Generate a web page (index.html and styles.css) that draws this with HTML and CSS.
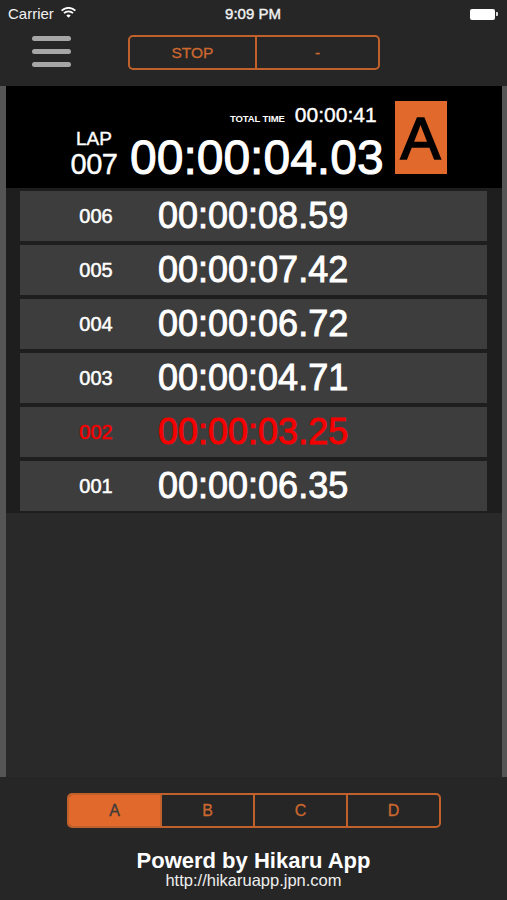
FILE: index.html
```html
<!DOCTYPE html>
<html>
<head>
<meta charset="utf-8">
<link rel="stylesheet" href="styles.css">
</head>
<body>
<div class="status">
  <div class="carrier">Carrier
    <svg class="wifi" width="15" height="11" viewBox="0 0 15 11">
      <path d="M0.6 3.6 A10 10 0 0 1 14.4 3.6" fill="none" stroke="#fff" stroke-width="1.8"/>
      <path d="M3 6.1 A6.6 6.6 0 0 1 12 6.1" fill="none" stroke="#fff" stroke-width="1.8"/>
      <path d="M5.3 8.5 A3.2 3.2 0 0 1 9.7 8.5 L7.5 10.8 Z" fill="#fff"/>
    </svg>
  </div>
  <div class="clock">9:09 PM</div>
  <div class="battery"><span class="batt-body"></span><span class="batt-nub"></span></div>
</div>

<div class="nav">
  <div class="hamburger"><span></span><span></span><span></span></div>
  <div class="seg seg-top">
    <div class="seg-item">STOP</div>
    <div class="seg-item">-</div>
  </div>
</div>

<div class="panel">
  <div class="header">
    <div class="lap">
      <div class="lap-label">LAP</div>
      <div class="lap-num">007</div>
    </div>
    <div class="main-time">
      <div class="total"><span class="total-label">TOTAL TIME</span><span class="total-val">00:00:41</span></div>
      <div class="big">00:00:04.03</div>
    </div>
    <div class="badge">A</div>
  </div>
  <div class="list">
    <div class="row"><span class="num">006</span><span class="time">00:00:08.59</span></div>
    <div class="row"><span class="num">005</span><span class="time">00:00:07.42</span></div>
    <div class="row"><span class="num">004</span><span class="time">00:00:06.72</span></div>
    <div class="row"><span class="num">003</span><span class="time">00:00:04.71</span></div>
    <div class="row red"><span class="num">002</span><span class="time">00:00:03.25</span></div>
    <div class="row"><span class="num">001</span><span class="time">00:00:06.35</span></div>
  </div>
  <div class="filler"></div>
</div>

<div class="seg seg-bottom">
  <div class="seg-item active">A</div>
  <div class="seg-item">B</div>
  <div class="seg-item">C</div>
  <div class="seg-item">D</div>
</div>

<div class="footer">
  <div class="powered">Powerd by Hikaru App</div>
  <div class="url">http://hikaruapp.jpn.com</div>
</div>
</body>
</html>
```

FILE: styles.css
```css
* { box-sizing: border-box; }
html, body { margin: 0; padding: 0; }
body {
  width: 507px;
  height: 900px;
  background: #262626;
  font-family: "Liberation Sans", Arial, sans-serif;
  color: #fff;
  overflow: hidden;
}

.status {
  height: 28px;
  display: grid;
  grid-template-columns: 1fr auto 1fr;
  align-items: center;
  padding: 0 9px 0 8px;
  font-size: 15px;
  line-height: 28px;
  color: #f2f2f2;
}
.carrier { display: flex; align-items: center; gap: 7px; }
.wifi { margin-top: -3px; }
.clock { text-align: center; -webkit-text-stroke: 0.4px #f2f2f2; }
.battery { justify-self: end; display: flex; align-items: center; }
.batt-body { width: 25px; height: 11px; background: #fff; border-radius: 2px; }
.batt-nub { width: 2px; height: 4px; background: #ddd; border-radius: 0 1px 1px 0; margin-left: 1px; }

.nav {
  height: 58px;
  display: flex;
  align-items: flex-start;
}
.hamburger {
  margin-left: 32px;
  margin-top: 8px;
  width: 39px;
  display: flex;
  flex-direction: column;
  gap: 8px;
}
.hamburger span {
  display: block;
  height: 5px;
  border-radius: 3px;
  background: #a6a6a6;
}

.seg {
  display: flex;
  border: 2px solid #c0612b;
  border-radius: 5px;
  overflow: hidden;
}
.seg-item {
  flex: 1;
  display: flex;
  align-items: center;
  justify-content: center;
  color: #cc682f;
  font-size: 15.5px;
  -webkit-text-stroke: 0.3px #cc682f;
}
.seg-item + .seg-item { border-left: 2px solid #c0612b; }
.seg-top {
  margin-left: 57px;
  margin-top: 7px;
  width: 252px;
  height: 35px;
}
.seg-top .seg-item:first-child { flex: 0 0 125px; }

.panel {
  height: 691px;
  border-left: 6px solid #555;
  border-right: 5px solid #555;
  display: flex;
  flex-direction: column;
  background: #292929;
}
.header {
  height: 102px;
  background: #000;
  display: flex;
  align-items: flex-end;
  padding-bottom: 7px;
}
.lap {
  margin-left: 64px;
  width: 48px;
  text-align: center;
  -webkit-text-stroke: 0.4px #fff;
}
.lap-label { font-size: 19px; line-height: 17px; }
.lap-num { font-size: 29px; line-height: 34px; letter-spacing: -0.5px; }
.main-time {
  margin-left: 12px;
  display: flex;
  flex-direction: column;
  align-items: flex-end;
}
.total {
  display: flex;
  align-items: baseline;
  padding-right: 7px;
  line-height: 30px;
}
.total-label { font-size: 9.5px; font-weight: bold; margin-right: 10px; letter-spacing: -0.1px; }
.total-val { font-size: 21px; -webkit-text-stroke: 0.4px #fff; }
.big { font-size: 48px; line-height: 47px; -webkit-text-stroke: 1px #fff; }
.badge {
  margin-left: 11px;
  margin-bottom: 7px;
  width: 52px;
  height: 73px;
  background: #e0692b;
  color: #000;
  font-size: 60px;
  line-height: 76px;
  text-align: center;
  overflow: hidden;
  -webkit-text-stroke: 1.6px #000;
}

.list {
  background: #1e1e1e;
  padding: 3px 15px 2px 14px;
  display: flex;
  flex-direction: column;
  gap: 4px;
}
.row {
  height: 50px;
  background: #3d3d3d;
  display: flex;
  align-items: center;
  -webkit-text-stroke: 0.5px #fff;
}
.num {
  margin-left: 44px;
  width: 64px;
  text-align: center;
  font-size: 20px;
}
.time {
  margin-left: 30px;
  font-size: 36px;
  -webkit-text-stroke: 0.9px #fff;
}
.row.red { color: #f50000; -webkit-text-stroke-color: #f50000; }
.row.red .time { -webkit-text-stroke-color: #f50000; }
.filler { flex: 1; }

.seg-bottom {
  margin: 16px 0 0 67px;
  width: 374px;
  height: 35px;
}
.seg-bottom .seg-item { font-size: 16px; }
.seg-bottom .seg-item.active {
  background: #e0692b;
  color: #3a3a3a;
  -webkit-text-stroke-color: #3a3a3a;
}

.footer { text-align: center; margin-top: 22px; }
.powered { font-size: 22px; font-weight: bold; line-height: 21px; }
.url { font-size: 16.5px; line-height: 16px; margin-top: 1px; color: #eee; }
```
